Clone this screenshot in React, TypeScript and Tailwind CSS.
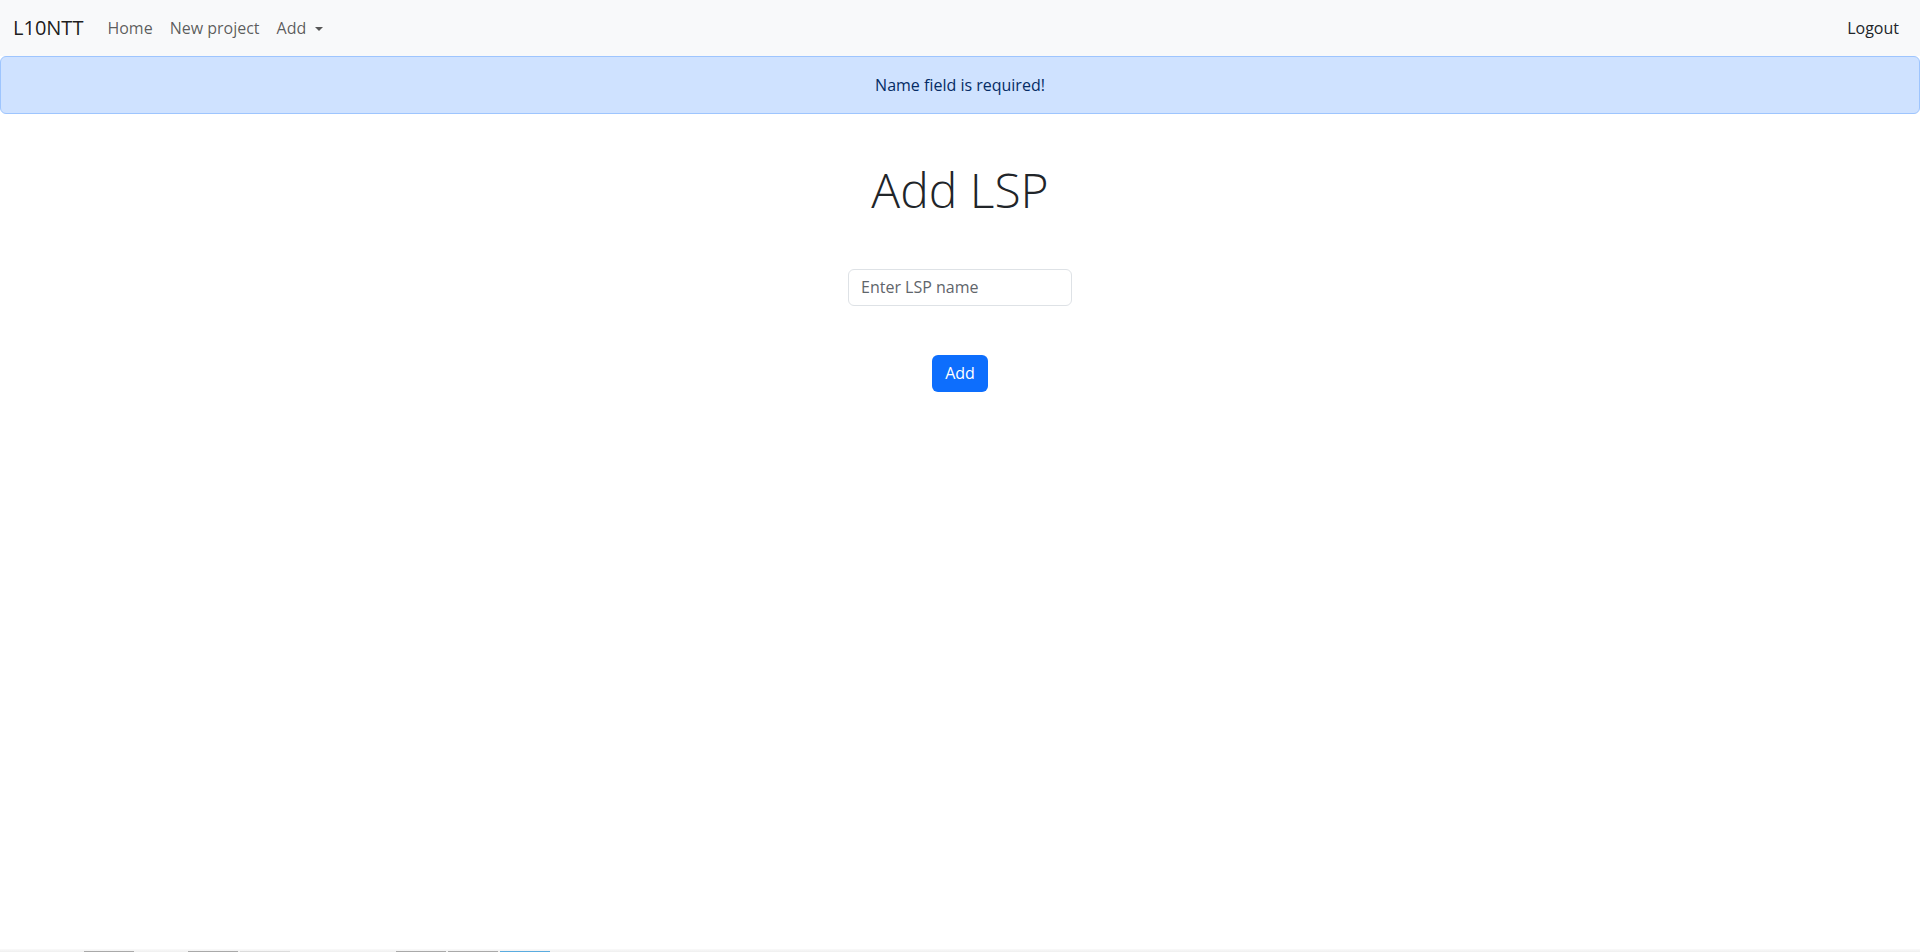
import React from 'react'

export default function App() {
    return (
        <div className="min-h-screen flex flex-col bg-white font-['Open_Sans',sans-serif] text-[#212529]">
            {/* Navbar */}
            <nav className="h-[56px] bg-[#f8f9fa] flex items-center justify-between px-[13px]">
                <div className="flex items-center">
                    <span className="text-[20px] text-black/90 mr-[24px] leading-[30px]">L10NTT</span>
                    <ul className="flex items-center text-[16px] text-black/65">
                        <li className="mr-[17px]">Home</li>
                        <li className="mr-[17px]">New project</li>
                        <li className="flex items-center">
                            Add
                            <span className="ml-[9px] mt-[2px] border-x-[4px] border-x-transparent border-t-[4px] border-t-black/65" />
                        </li>
                    </ul>
                </div>
                <span className="text-[16px] text-[#212529] mr-[8px]">Logout</span>
            </nav>

            {/* Alert */}
            <div className="h-[58px] flex items-center justify-center bg-[#cfe2ff] border border-[#9ec5fe] rounded-[6px] text-[#052c65] text-[16px]">
                Name field is required!
            </div>

            {/* Form */}
            <div className="flex flex-col items-center">
                <h1 className="mt-[47px] text-[48px] font-light leading-[1.2]">Add LSP</h1>
                <input
                    type="text"
                    placeholder="Enter LSP name"
                    className="mt-[50px] w-[224px] h-[37px] px-[12px] border border-[#dee2e6] rounded-[6px] text-[16px] outline-none placeholder:text-[#5f656b]"
                />
                <button className="mt-[49px] h-[37px] px-[13px] bg-[#0d6efd] text-white text-[16px] rounded-[6px]">
                    Add
                </button>
            </div>

            {/* bottom strip */}
            <div className="mt-auto h-[3px] bg-gradient-to-b from-[#fafafa] to-[#efefef] relative">
                <div className="absolute bottom-0 left-0 right-0 flex h-[1px]">
                    <div className="w-[84px]" />
                    <div className="w-[50px] bg-[#a9a9a9]" />
                    <div className="w-[54px]" />
                    <div className="w-[50px] bg-[#a9a9a9]" />
                    <div className="w-[2px]" />
                    <div className="w-[50px] bg-[#dcdcdc]" />
                    <div className="w-[106px]" />
                    <div className="w-[50px] bg-[#a9a9a9]" />
                    <div className="w-[2px]" />
                    <div className="w-[50px] bg-[#a9a9a9]" />
                    <div className="w-[2px]" />
                    <div className="w-[50px] bg-[#5aace0]" />
                </div>
            </div>
        </div>
    )
}
